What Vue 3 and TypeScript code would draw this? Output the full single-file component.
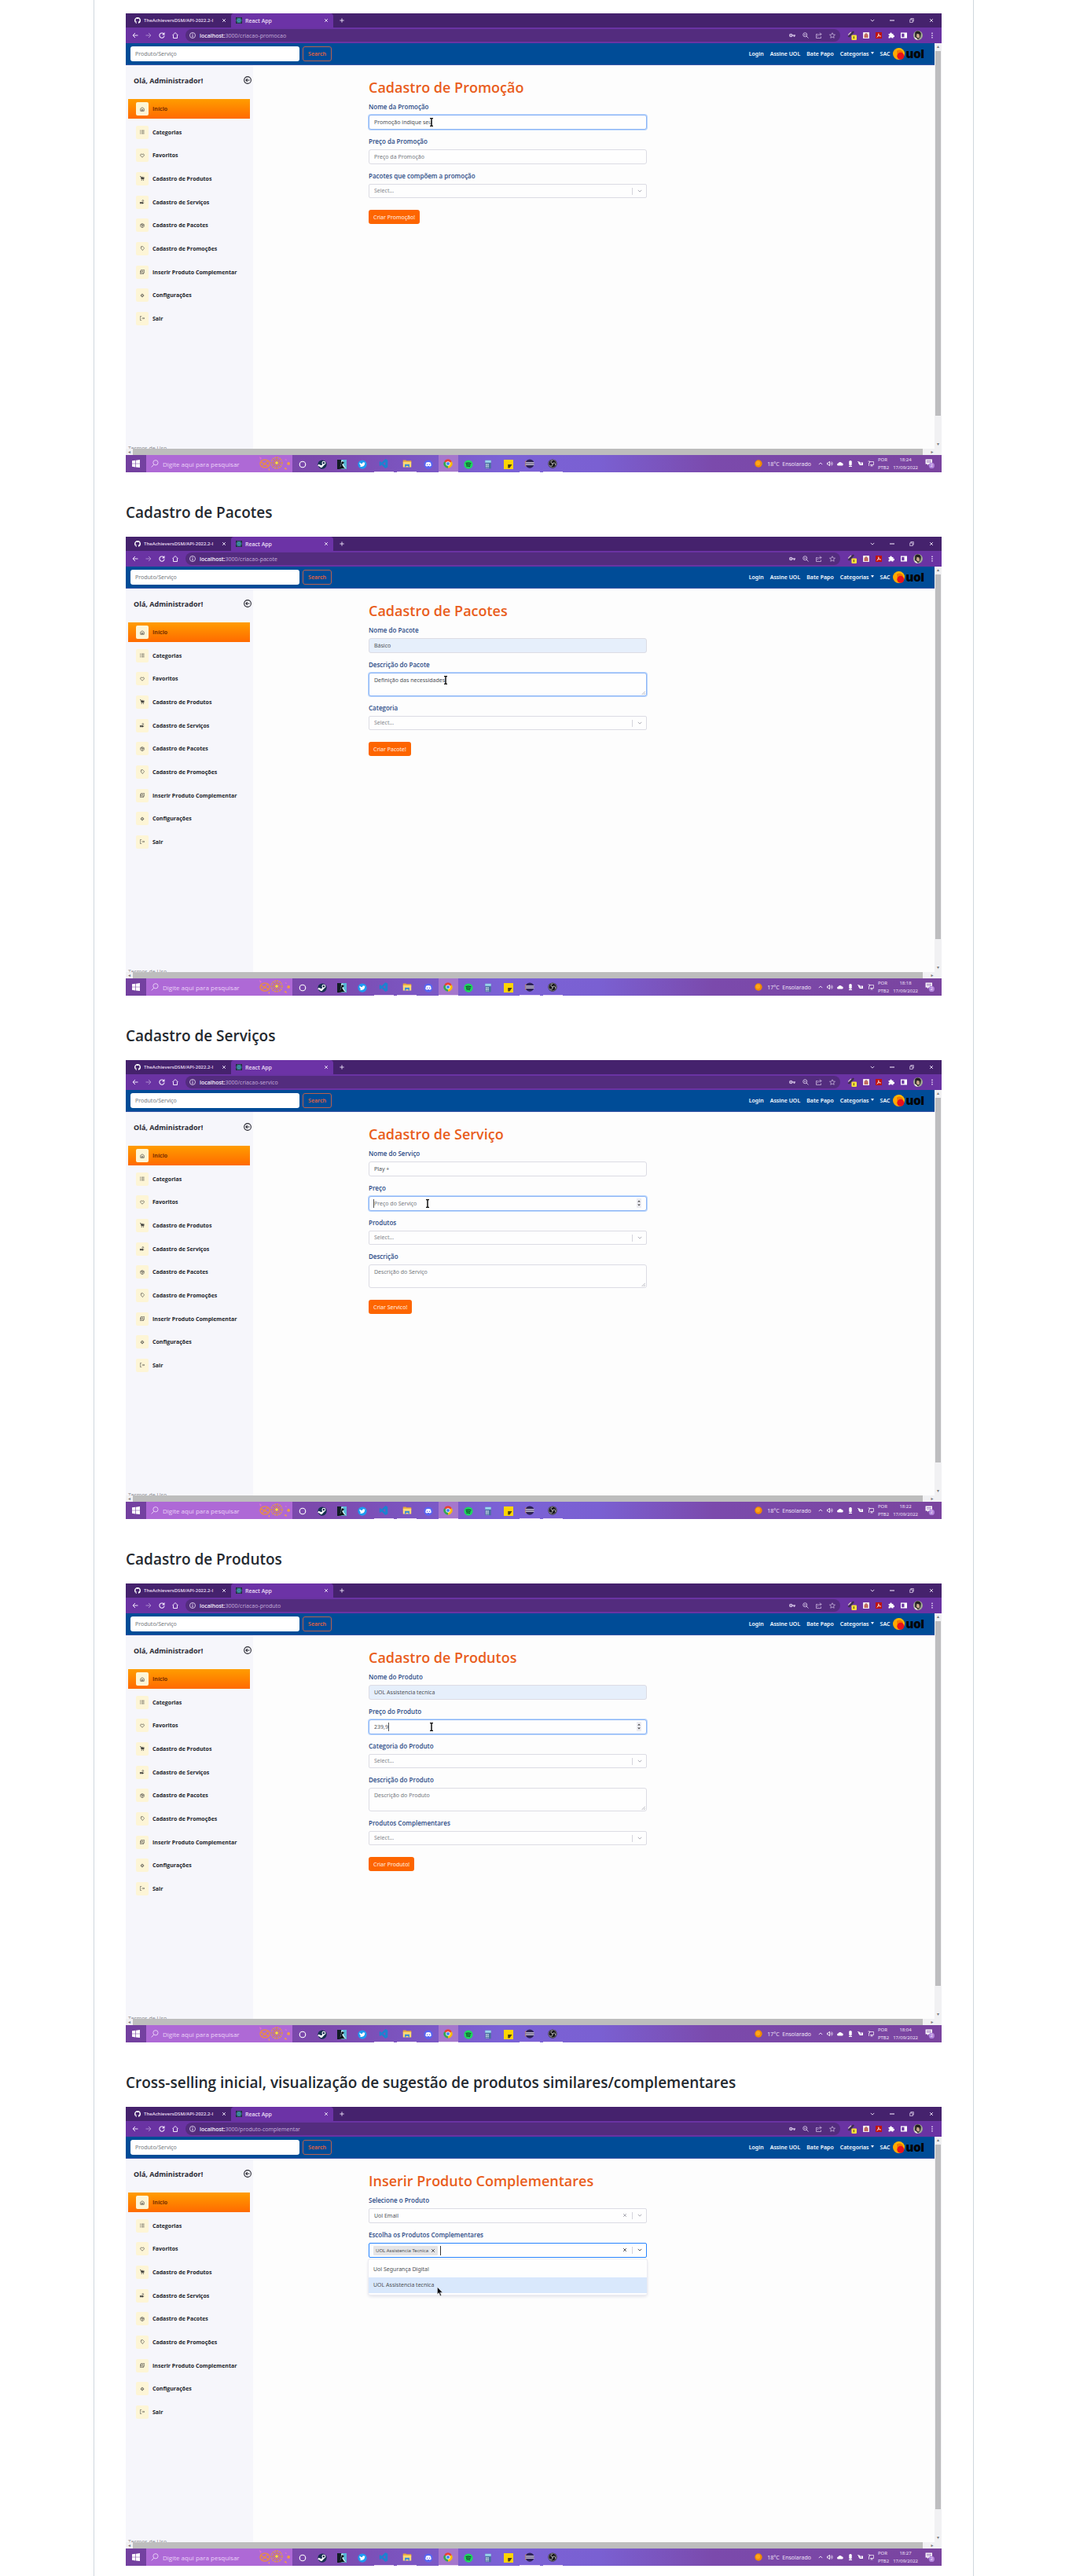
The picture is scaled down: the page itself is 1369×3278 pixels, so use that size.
<script setup lang="ts">
interface Field {
  kind: 'text' | 'area' | 'select' | 'picked' | 'multi'
  label: string
  value?: string
  hint?: string
  focus?: boolean
  filled?: boolean
  spin?: boolean
  pointer?: number
  caret?: number
}

interface Shot {
  id: string
  heading?: string
  path: string
  title: string
  fields: Field[]
  action?: string
  weather: string
  time: string
}

const shots: Shot[] = [
  {
    id: 'promocao',
    path: 'criacao-promocao',
    title: 'Cadastro de Promoção',
    fields: [
      { kind: 'text', label: 'Nome da Promoção', value: 'Promoção indique seu', focus: true, pointer: 80 },
      { kind: 'text', label: 'Preço da Promoção', hint: 'Preço da Promoção' },
      { kind: 'select', label: 'Pacotes que compõem a promoção' },
    ],
    action: 'Criar Promoção!',
    weather: '18°C',
    time: '18:24',
  },
  {
    id: 'pacote',
    heading: 'Cadastro de Pacotes',
    path: 'criacao-pacote',
    title: 'Cadastro de Pacotes',
    fields: [
      { kind: 'text', label: 'Nome do Pacote', value: 'Básico', filled: true },
      { kind: 'area', label: 'Descrição do Pacote', value: 'Definição das necessidades', focus: true, pointer: 98 },
      { kind: 'select', label: 'Categoria' },
    ],
    action: 'Criar Pacote!',
    weather: '17°C',
    time: '18:18',
  },
  {
    id: 'servico',
    heading: 'Cadastro de Serviços',
    path: 'criacao-servico',
    title: 'Cadastro de Serviço',
    fields: [
      { kind: 'text', label: 'Nome do Serviço', value: 'Play +' },
      { kind: 'text', label: 'Preço', hint: 'Preço do Serviço', focus: true, spin: true, pointer: 75, caret: 6 },
      { kind: 'select', label: 'Produtos' },
      { kind: 'area', label: 'Descrição', hint: 'Descrição do Serviço' },
    ],
    action: 'Criar Servico!',
    weather: '18°C',
    time: '18:22',
  },
  {
    id: 'produto',
    heading: 'Cadastro de Produtos',
    path: 'criacao-produto',
    title: 'Cadastro de Produtos',
    fields: [
      { kind: 'text', label: 'Nome do Produto', value: 'UOL Assistencia tecnica', filled: true },
      { kind: 'text', label: 'Preço do Produto', value: '239,9', focus: true, spin: true, pointer: 80, caret: 25 },
      { kind: 'select', label: 'Categoria do Produto' },
      { kind: 'area', label: 'Descrição do Produto', hint: 'Descrição do Produto' },
      { kind: 'select', label: 'Produtos Complementares' },
    ],
    action: 'Criar Produto!',
    weather: '17°C',
    time: '18:04',
  },
  {
    id: 'complementar',
    heading: 'Cross-selling inicial, visualização de sugestão de produtos similares/complementares',
    path: 'produto-complementar',
    title: 'Inserir Produto Complementares',
    fields: [
      { kind: 'picked', label: 'Selecione o Produto', value: 'Uol Email' },
      { kind: 'multi', label: 'Escolha os Produtos Complementares', value: 'UOL Assistencia Tecnica', focus: true },
    ],
    weather: '18°C',
    time: '18:27',
  },
]

const menu = [
  ['home', 'Início'],
  ['list', 'Categorias'],
  ['heart', 'Favoritos'],
  ['cart', 'Cadastro de Produtos'],
  ['service', 'Cadastro de Serviços'],
  ['box', 'Cadastro de Pacotes'],
  ['tag', 'Cadastro de Promoções'],
  ['insert', 'Inserir Produto Complementar'],
  ['gear', 'Configurações'],
  ['exit', 'Sair'],
]

const navLinks = ['Login', 'Assine UOL', 'Bate Papo']

const apps = [
  { icon: 'cortana' },
  { icon: 'steam' },
  { icon: 'kindle' },
  { icon: 'twitter' },
  { icon: 'vscode', open: true },
  { icon: 'folder', open: true },
  { icon: 'discord' },
  { icon: 'chrome', open: true, active: true },
  { icon: 'spotify' },
  { icon: 'calc' },
  { icon: 'notes' },
  { icon: 'eclipse', open: true },
  { icon: 'obs', open: true },
]
</script>

<template>
  <svg class="sprite" aria-hidden="true">
    <defs>
      <symbol id="i-github" viewBox="0 0 16 16"><path fill="#fff" d="M8 0C3.580 0 0 3.580 0 8c0 3.540 2.290 6.530 5.470 7.590.4.070.550-.170.550-.380v-1.490c-2.010.370-2.530-.490-2.690-.940-.090-.230-.480-.940-.820-1.130-.280-.150-.680-.520-.010-.530.630-.010 1.080.580 1.230.820.720 1.210 1.870.870 2.330.660.070-.520.280-.870.510-1.070-1.780-.2-3.640-.890-3.640-3.950 0-.870.310-1.590.820-2.150-.080-.2-.360-1.020.080-2.120 0 0 .670-.210 2.200.820a7.500 7.500 0 0 1 4 0c1.530-1.040 2.200-.820 2.200-.820.440 1.100.160 1.920.080 2.120.510.560.820 1.270.820 2.150 0 3.070-1.870 3.750-3.650 3.950.290.250.540.730.540 1.480v2.200c0 .210.150.460.550.380A8 8 0 0 0 8 0z" /></symbol>
      <symbol id="i-react" viewBox="0 0 16 16"><rect width="16" height="16" fill="#20303c" /><g fill="none" stroke="#4fc3dc"><ellipse cx="8" cy="8" rx="7" ry="2.700" /><ellipse cx="8" cy="8" rx="7" ry="2.700" transform="rotate(60 8 8)" /><ellipse cx="8" cy="8" rx="7" ry="2.700" transform="rotate(120 8 8)" /></g><circle cx="8" cy="8" r="1.500" fill="#4fc3dc" /></symbol>
      <symbol id="i-close" viewBox="0 0 16 16"><path d="M3 3l10 10M13 3L3 13" fill="none" stroke="currentColor" stroke-width="2.500" /></symbol>
      <symbol id="i-plus" viewBox="0 0 16 16"><path d="M8 1v14M1 8h14" fill="none" stroke="currentColor" stroke-width="2.500" /></symbol>
      <symbol id="i-down" viewBox="0 0 16 16"><path d="M2 5l6 6 6-6" fill="none" stroke="currentColor" stroke-width="2.500" /></symbol>
      <symbol id="i-up" viewBox="0 0 16 16"><path d="M2 11l6-6 6 6" fill="none" stroke="currentColor" stroke-width="2.500" /></symbol>
      <symbol id="i-min" viewBox="0 0 16 16"><path d="M0 8h16" stroke="currentColor" stroke-width="3" /></symbol>
      <symbol id="i-restore" viewBox="0 0 16 16"><path d="M2 5h9v10H2zM5 5V1h9v10h-3" fill="none" stroke="currentColor" stroke-width="2" /></symbol>
      <symbol id="i-back" viewBox="0 0 16 16"><path d="M15 8H2M8 2L2 8l6 6" fill="none" stroke="currentColor" stroke-width="2" /></symbol>
      <symbol id="i-forward" viewBox="0 0 16 16"><path d="M1 8h13M8 2l6 6-6 6" fill="none" stroke="currentColor" stroke-width="2" /></symbol>
      <symbol id="i-reload" viewBox="0 0 16 16"><path d="M13 4.500A6.200 6.200 0 1 0 14.200 9" fill="none" stroke="currentColor" stroke-width="2.300" /><path d="M15 0v7H8z" fill="currentColor" /></symbol>
      <symbol id="i-house" viewBox="0 0 16 16"><path d="M1 8l7-7 7 7M3 7v8h10V7" fill="none" stroke="currentColor" stroke-width="2" /></symbol>
      <symbol id="i-info" viewBox="0 0 16 16"><circle cx="8" cy="8" r="7" fill="none" stroke="currentColor" stroke-width="1.600" /><path d="M8 3.500v2M8 7v5.500" stroke="currentColor" stroke-width="2" /></symbol>
      <symbol id="i-key" viewBox="0 0 16 16"><circle cx="4.500" cy="8" r="3" fill="none" stroke="currentColor" stroke-width="3" /><path d="M7 8h9M13 8v4" stroke="currentColor" stroke-width="3" /></symbol>
      <symbol id="i-lens" viewBox="0 0 16 16"><circle cx="6.500" cy="6.500" r="5" fill="none" stroke="currentColor" stroke-width="2" /><path d="M10 10l5 5M4 6.500h5" stroke="currentColor" stroke-width="2" /></symbol>
      <symbol id="i-share" viewBox="0 0 16 16"><path d="M5 5H1v10h12v-4M4 11c0-5 4-6 10-6M10 1l4 4-4 4" fill="none" stroke="currentColor" stroke-width="1.600" /></symbol>
      <symbol id="i-star" viewBox="0 0 16 16"><path d="M8 1.500l2 4.500 5 .5-3.800 3.200 1.200 4.800L8 12l-4.400 2.500 1.200-4.800L1 6.500 6 6z" fill="none" stroke="currentColor" stroke-width="1.500" /></symbol>
      <symbol id="i-pen" viewBox="0 0 20 20"><path d="M1 13L12 1l3 2L5 14z" fill="#3b3048" /><path d="M2 9l6-6" stroke="#d8cfc0" stroke-width="2" /><rect x="9" y="9" width="11" height="11" rx="2" fill="#f7e03c" /><path d="M14 12v5" stroke="#6a5a10" stroke-width="2" /></symbol>
      <symbol id="i-ext" viewBox="0 0 16 16"><rect width="16" height="16" rx="1" fill="#f4e8e8" /><path d="M4 14V7l3-4v11M9 14V3l3 4v7" fill="#e0623a" stroke="#8a3a4a" /></symbol>
      <symbol id="i-pdf" viewBox="0 0 16 16"><rect width="16" height="16" fill="#c0140c" /><path d="M3 13C7 11 8 6 7.500 3M7.500 4c0 4 3 6 6 6M4 11c3-2 6-2 9-1" fill="none" stroke="#fff" stroke-width="1.400" /></symbol>
      <symbol id="i-puzzle" viewBox="0 0 16 16"><path fill="#fff" d="M1 4h4a2.200 2.200 0 1 1 4 0h4v4a2.200 2.200 0 1 1 0 4v3H9a2 2 0 1 0-4 0H1v-4a2 2 0 1 0 0-4z" /></symbol>
      <symbol id="i-panel" viewBox="0 0 16 16"><path fill="#fff" d="M0 1h16v14H0zM2.500 3.500v9H9v-9z" fill-rule="evenodd" /></symbol>
      <symbol id="i-avatar" viewBox="0 0 16 16"><circle cx="8" cy="8" r="8" fill="#9fa594" /><path d="M3 3c3-4 9-3 10 2l-1 6-4 4-5-4z" fill="#22201f" /><path d="M6 5l4 1 1 5-3 2-3-3z" fill="#c9a58c" /><path d="M1 11l4 1 3 4-4-1z" fill="#e8e4dc" /></symbol>
      <symbol id="i-dots" viewBox="0 0 16 16"><g fill="currentColor"><circle cx="8" cy="2.500" r="1.700" /><circle cx="8" cy="8" r="1.700" /><circle cx="8" cy="13.500" r="1.700" /></g></symbol>
      <symbol id="i-uolball" viewBox="0 0 16 16"><circle cx="8" cy="8" r="8" fill="#ffa800" /><path d="M8 0a8 8 0 0 1 8 8l-3 3-6-1-3-5C4 2 5 1 8 0z" fill="#ffc400" opacity=".6" /><path d="M5 4c3-3 9-1 9 3l-2 6-5 1z" fill="#f57b00" /><circle cx="10.500" cy="11" r="4.800" fill="#e8101c" /></symbol>
      <symbol id="i-circleback" viewBox="0 0 16 16"><circle cx="8" cy="8" r="7" fill="none" stroke="currentColor" stroke-width="1.700" /><path d="M12 8H4.500M7.500 5l-3 3 3 3" fill="none" stroke="currentColor" stroke-width="1.700" /></symbol>
      <symbol id="i-home" viewBox="0 0 16 16"><path d="M2 6l6-4 6 4v8H2zM6 14V9h4v5" fill="none" stroke="currentColor" stroke-width="1.700" /></symbol>
      <symbol id="i-list" viewBox="0 0 16 16"><path d="M5 3h10M5 8h10M5 13h10M0 3h3M0 8h3M0 13h3" stroke="currentColor" stroke-width="1.700" /></symbol>
      <symbol id="i-heart" viewBox="0 0 16 16"><path d="M8 14L2.500 8.500C-.5 5 4 .5 8 4.500c4-4 8.500.5 5.500 4z" fill="none" stroke="currentColor" stroke-width="1.700" /></symbol>
      <symbol id="i-cart" viewBox="0 0 16 16"><path d="M0 1h3l2 9h9" fill="none" stroke="currentColor" stroke-width="2" /><path d="M4 3h3l2 3V2h2l1 3 3-2-1 7H5z" fill="currentColor" /><circle cx="6" cy="13.500" r="1.700" fill="currentColor" /><circle cx="12" cy="13.500" r="1.700" fill="currentColor" /></symbol>
      <symbol id="i-service" viewBox="0 0 16 16"><path d="M0 8h3v6H0zM4 8h4l2 2h5l-5 4H4z" fill="currentColor" /><circle cx="10" cy="4" r="2.500" fill="none" stroke="currentColor" stroke-width="1.500" /></symbol>
      <symbol id="i-box" viewBox="0 0 16 16"><path d="M2 4.500L8 1l6 3.500v7L8 15l-6-3.500zM2 4.500L8 8l6-3.500M8 8v7M5 3l6 3.500V9" fill="none" stroke="currentColor" stroke-width="1.500" /></symbol>
      <symbol id="i-tag" viewBox="0 0 16 16"><path d="M4 2l5-1 6 6-6 8-6-7z" fill="none" stroke="currentColor" stroke-width="1.500" /><circle cx="7" cy="5" r="1.200" fill="currentColor" /></symbol>
      <symbol id="i-insert" viewBox="0 0 16 16"><path d="M4 1h11v10H4zM4 5H1v10h11v-4M9.500 3.500v5M7 6h5" fill="none" stroke="currentColor" stroke-width="1.500" /></symbol>
      <symbol id="i-gear" viewBox="0 0 16 16"><circle cx="8" cy="8" r="4.500" fill="none" stroke="currentColor" stroke-width="2.500" stroke-dasharray="2.500 1" /><circle cx="8" cy="8" r="3.500" fill="none" stroke="currentColor" /><circle cx="8" cy="8" r="1.300" fill="currentColor" /></symbol>
      <symbol id="i-exit" viewBox="0 0 16 16"><path d="M6 1H1v14h5M6 8h9M12 5l3 3-3 3" fill="none" stroke="currentColor" stroke-width="1.500" /></symbol>
      <symbol id="i-ibeam" viewBox="0 0 6 11"><path d="M1 .5h1.500l.5.500.5-.5H5M1 10.500h1.500l.5-.5.5.5H5M3 1v9" fill="none" stroke="#111" stroke-width="1.500" /></symbol>
      <symbol id="i-arrow" viewBox="0 0 8 12"><path d="M.5.500v9l2-2 1.500 4 1.500-.6L4 7.200h3z" fill="#0b0b10" stroke="#fff" stroke-width=".4" /></symbol>
      <symbol id="i-grip" viewBox="0 0 8 8"><path d="M1 8l7-7M5 8l3-3" stroke="#8a8a96" /></symbol>
      <symbol id="i-spin" viewBox="0 0 6 12"><rect width="6" height="12" fill="#ececf2" /><path d="M1.200 4.500L3 2.500l1.800 2zM1.200 7.500L3 9.500l1.800-2z" fill="#444" /></symbol>
      <symbol id="i-windows" viewBox="0 0 16 16"><path d="M0 2l7-1v6.500H0zM8 1l8-1v7.500H8zM0 8.500h7V15l-7-1zM8 8.500h8V16l-8-1z" fill="#fff" /></symbol>
      <symbol id="i-search" viewBox="0 0 16 16"><circle cx="9.500" cy="6" r="5" fill="none" stroke="currentColor" stroke-width="1.500" /><path d="M6 10l-5 5" stroke="currentColor" stroke-width="1.500" /></symbol>
      <symbol id="i-party" viewBox="0 0 40 20"><g fill="none" stroke="#e58a4d" stroke-width="1.600"><ellipse cx="7" cy="10" rx="6" ry="5" /><path d="M2 8l10 5M4 13l7-7" /></g><g fill="none" stroke="#e59a4d" stroke-width="1.300"><circle cx="22" cy="9" r="7" stroke-dasharray="2 1" /><circle cx="22" cy="9" r="4" stroke="#d8767a" /><path d="M22 1v16M14 9h16M16.500 3.500l11 11M27.500 3.500l-11 11" stroke="#c48858" stroke-width=".9" /></g><circle cx="22" cy="9" r="1.800" fill="#f7e03c" /><path d="M36 8c3 0 4 1 2 4l-3-1zM31 16l3-1 1 3z" fill="#f0a040" /><path d="M0 1l3 2-2 2zM32 5l2-1 1 2z" fill="#e070d0" /><path d="M11 17l2-1v3z" fill="#f0a040" /></symbol>
      <symbol id="i-cortana" viewBox="0 0 16 16"><circle cx="8" cy="8" r="5" fill="none" stroke="#fff" stroke-width="1.500" /></symbol>
      <symbol id="i-steam" viewBox="0 0 16 16"><circle cx="8" cy="8" r="7.500" fill="#15304f" /><path d="M1 9l6 2.500L11 7" fill="none" stroke="#fff" stroke-width="3" /><circle cx="10.500" cy="5.500" r="2.500" fill="#15304f" stroke="#fff" stroke-width="1.500" /><circle cx="6" cy="11.500" r="1.800" fill="#fff" /></symbol>
      <symbol id="i-kindle" viewBox="0 0 16 16"><rect x="0" y="0" width="16" height="16" fill="#58b8d8" /><path d="M0 0h7v16H0z" fill="#111c24" /><path d="M7 1h3l1 8 4 6H4l2-6z" fill="#c9eef4" /><path d="M13 4l-5 4 4 6 3 1H2l4-4V7z" fill="#0d1418" /><circle cx="9" cy="5" r="2" fill="#0d1418" /></symbol>
      <symbol id="i-twitter" viewBox="0 0 16 16"><circle cx="8" cy="8" r="7.500" fill="#1d9bf0" /><path fill="#fff" d="M3.500 4.500c1.500 1.800 3 2.300 4.500 2.300C8 4 10.500 3.500 11.500 5l1.500-.4-.8 1.400c.2 4.200-4.200 7.500-8.700 5.200 1.200 0 2-.3 2.500-.9C4.500 10 4.200 9 4.200 8.500 3 7.500 3 5.500 3.500 4.500z" /></symbol>
      <symbol id="i-vscode" viewBox="0 0 16 16"><path d="M11 0l4 2v12l-4 2-6-6-3 2-1-1V5l1-1 3 2zM11 5L7 8l4 3z" fill="#1b83cf" fill-rule="evenodd" /></symbol>
      <symbol id="i-folder" viewBox="0 0 16 16"><path d="M1 2h5l1 1h8v4H1z" fill="#e8a93a" /><path d="M1 5h14v9H1z" fill="#fcd974" /><path d="M4 9h8v5h-2v-2H6v2H4z" fill="#3d8ed6" /></symbol>
      <symbol id="i-discord" viewBox="0 0 16 16"><circle cx="8" cy="8" r="7.500" fill="#5865f2" /><path d="M4 5c3-1.500 5-1.500 8 0l1 5c-1 1-2 1.500-3 1.500l-.5-1h-3l-.5 1c-1 0-2-.5-3-1.500z" fill="#fff" /><circle cx="6.200" cy="8.300" r="1" fill="#5865f2" /><circle cx="9.800" cy="8.300" r="1" fill="#5865f2" /></symbol>
      <symbol id="i-chrome" viewBox="0 0 16 16"><path d="M8 8L1.500 4.200A7.500 7.500 0 0 1 14.500 4.200z" fill="#e94335" /><path d="M8 8h0L1.500 4.200A7.500 7.500 0 0 0 8 15.500z" fill="#33a852" /><path d="M8 8l6.500-3.800A7.500 7.500 0 0 1 8 15.500z" fill="#fbbc05" /><circle cx="8" cy="8" r="3.700" fill="#fff" /><circle cx="8" cy="8" r="2.800" fill="#4285f4" /></symbol>
      <symbol id="i-spotify" viewBox="0 0 16 16"><circle cx="8" cy="8" r="7.500" fill="#1ed760" /><path d="M3.500 6c3-1 6.500-.7 9 .7M4 8.500c2.500-.8 5.300-.5 7.500.7M4.500 11c2-.6 4.200-.4 6 .5" fill="none" stroke="#12351f" stroke-width="1.500" /></symbol>
      <symbol id="i-calc" viewBox="0 0 16 16"><path d="M3 1h10v14H3z" fill="#4a6fa0" /><path d="M3 1h10v4H3z" fill="#9ad4ec" /><path d="M4 7h2v2H4zM7 7h2v2H7zM4 10h2v2H4zM7 10h2v2H7zM4 13h2v1H4zM7 13h2v1H7z" fill="#dfe8f0" /></symbol>
      <symbol id="i-notes" viewBox="0 0 16 16"><rect x="0" y="0" width="16" height="16" fill="#ffd500" /><path d="M7 8h7l-4 6H7z" fill="#4a3f16" /></symbol>
      <symbol id="i-eclipse" viewBox="0 0 16 16"><circle cx="8" cy="8" r="7.500" fill="#2c2255" /><path d="M.5 6.500h15M.5 9.500h15" stroke="#e4e0ee" stroke-width="1.700" /><path d="M2 3a7.500 7.500 0 0 0 0 10" fill="none" stroke="#d98a3a" /></symbol>
      <symbol id="i-obs" viewBox="0 0 16 16"><circle cx="8" cy="8" r="7.500" fill="#17161a" /><g fill="none" stroke="#c8c8c8" stroke-width="1.300"><circle cx="8" cy="8" r="6.500" stroke-width=".7" /><path d="M8 8C4 7 5 3 8 3M8 8c3-3 6 0 4.500 2.500M8 8c1 4-3 5.500-5 3" /></g></symbol>
      <symbol id="i-sun" viewBox="0 0 16 16"><circle cx="8" cy="8" r="7.500" fill="#f08a00" /><circle cx="7" cy="7" r="4.500" fill="#ffa51a" /></symbol>
      <symbol id="i-speaker" viewBox="0 0 16 16"><path d="M1 6h3l3-4v12l-3-4H1zM9.500 5c1.500 2 1.500 4 0 6M12 3c3 3 3 7 0 10" fill="none" stroke="#fff" stroke-width="1.500" /></symbol>
      <symbol id="i-cloud" viewBox="0 0 16 16"><path d="M3 13a3 3 0 0 1 0-6 5 5 0 0 1 9-.5 3.300 3.300 0 0 1 1 6.500z" fill="#fff" /></symbol>
      <symbol id="i-mic" viewBox="0 0 16 16"><rect x="4.500" y="0" width="7" height="13" rx="3" fill="#fff" /><path d="M4 15h8" stroke="#fff" stroke-width="2" /></symbol>
      <symbol id="i-battery" viewBox="0 0 16 16"><path d="M3 5h11v7H5V9H3z" fill="#fff" /><path d="M0 3h3v4M5 3v3H2" fill="none" stroke="#fff" stroke-width="1.500" /><path d="M9 5v5" stroke="#7a4aa8" stroke-width="1.500" /></symbol>
      <symbol id="i-network" viewBox="0 0 16 16"><path d="M4 3h11v8H6M10 11v3M7 14h6M1 2h4v4H3v8" fill="none" stroke="#fff" stroke-width="1.400" /></symbol>
      <symbol id="i-notice" viewBox="0 0 20 20"><path d="M1 1h14v10H7l-2 3v-3H1z" fill="#fff" /><path d="M3 4h10M3 7h10" stroke="#7a45a5" stroke-width="1.200" /><circle cx="14" cy="14" r="6" fill="#b184dc" /></symbol>
    </defs>
  </svg>

  <article class="readme">
    <section v-for="shot in shots" :key="shot.id">
      <h3 v-if="shot.heading" class="heading">{{ shot.heading }}</h3>
      <div class="screen">
        <div class="tabs">
          <div class="tab">
            <svg class="ic8"><use href="#i-github" /></svg>
            <span class="tab-name">TheAchieversDSM/API-2022.2-I</span>
            <svg class="ic6"><use href="#i-close" /></svg>
          </div>
          <div class="tab current">
            <svg class="ic8"><use href="#i-react" /></svg>
            <span class="tab-name">React App</span>
            <svg class="ic6"><use href="#i-close" /></svg>
          </div>
          <svg class="ic6 plus"><use href="#i-plus" /></svg>
          <div class="controls">
            <svg class="ic6"><use href="#i-down" /></svg>
            <svg class="ic6"><use href="#i-min" /></svg>
            <svg class="ic6"><use href="#i-restore" /></svg>
            <svg class="ic6"><use href="#i-close" /></svg>
          </div>
        </div>

        <div class="toolbar">
          <svg class="ic8"><use href="#i-back" /></svg>
          <svg class="ic8 dim"><use href="#i-forward" /></svg>
          <svg class="ic8"><use href="#i-reload" /></svg>
          <svg class="ic8"><use href="#i-house" /></svg>
          <div class="address">
            <svg class="ic8"><use href="#i-info" /></svg>
            <span class="url"><b>localhost:</b>3000/{{ shot.path }}</span>
            <div class="address-tools">
              <svg class="ic8"><use href="#i-key" /></svg>
              <svg class="ic8"><use href="#i-lens" /></svg>
              <svg class="ic8"><use href="#i-share" /></svg>
              <svg class="ic8"><use href="#i-star" /></svg>
            </div>
          </div>
          <div class="extensions">
            <svg class="ic12"><use href="#i-pen" /></svg>
            <svg class="ic8"><use href="#i-ext" /></svg>
            <svg class="ic8"><use href="#i-pdf" /></svg>
            <svg class="ic8"><use href="#i-puzzle" /></svg>
            <svg class="ic8"><use href="#i-panel" /></svg>
            <svg class="ic12"><use href="#i-avatar" /></svg>
            <svg class="ic8"><use href="#i-dots" /></svg>
          </div>
        </div>

        <div class="viewport">
          <div class="page">
            <header class="navbar">
              <input class="search" type="search" placeholder="Produto/Serviço" aria-label="Produto/Serviço" />
              <button class="search-btn" type="button">Search</button>
              <nav class="links">
                <a v-for="link in navLinks" :key="link" href="#">{{ link }}</a>
                <a href="#" class="drop">Categorias</a>
                <a href="#">SAC</a>
                <a href="#" class="logo">
                  <svg class="ball"><use href="#i-uolball" /></svg>
                  <span>uol</span>
                </a>
              </nav>
            </header>
            <div class="body">
              <aside class="sidebar">
                <div class="hello">
                  <strong>Olá, Administrador!</strong>
                  <svg class="ic10"><use href="#i-circleback" /></svg>
                </div>
                <ul class="menu">
                  <li v-for="([icon, name], i) in menu" :key="name">
                    <a href="#" :class="{ on: i === 0 }">
                      <span class="menu-icon"><svg class="ic6"><use :href="'#i-' + icon" /></svg></span>
                      {{ name }}
                    </a>
                  </li>
                </ul>
                <div class="terms">Termos de Uso</div>
              </aside>
              <main class="content">
                <form class="form" @submit.prevent>
                  <h1>{{ shot.title }}</h1>
                  <div v-for="(f, i) in shot.fields" :key="f.label" class="field">
                    <label :for="shot.id + i">{{ f.label }}</label>
                    <div class="control">
                      <input
                        v-if="f.kind === 'text'"
                        :id="shot.id + i"
                        type="text"
                        class="box"
                        :class="{ focus: f.focus, filled: f.filled }"
                        :value="f.value"
                        :placeholder="f.hint"
                      />
                      <textarea
                        v-else-if="f.kind === 'area'"
                        :id="shot.id + i"
                        class="box area"
                        :class="{ focus: f.focus }"
                        :value="f.value"
                        :placeholder="f.hint"
                      ></textarea>
                      <select
                        v-else-if="f.kind === 'select' || f.kind === 'picked'"
                        :id="shot.id + i"
                        class="box pick"
                        :class="{ chosen: f.kind === 'picked' }"
                      >
                        <option>{{ f.value || 'Select...' }}</option>
                      </select>
                      <div v-else class="box multi">
                        <span class="chip">{{ f.value }}<svg class="ic6"><use href="#i-close" /></svg></span>
                        <input :id="shot.id + i" type="text" role="combobox" aria-expanded="true" />
                        <ul class="options" role="listbox">
                          <li role="option">Uol Segurança Digital</li>
                          <li role="option" class="hover">UOL Assistencia tecnica</li>
                        </ul>
                        <svg class="arrow"><use href="#i-arrow" /></svg>
                      </div>
                      <div v-if="f.kind !== 'text' && f.kind !== 'area'" class="tools" :class="{ strong: f.kind === 'multi' }">
                        <svg v-if="f.kind !== 'select'" class="ic6"><use href="#i-close" /></svg>
                        <i></i>
                        <svg class="ic6"><use href="#i-down" /></svg>
                      </div>
                      <svg v-if="f.kind === 'area'" class="grip"><use href="#i-grip" /></svg>
                      <svg v-if="f.spin" class="spin"><use href="#i-spin" /></svg>
                      <i v-if="f.caret" class="caret" :style="{ left: f.caret + 'px' }"></i>
                      <svg v-if="f.pointer" class="ibeam" :style="{ left: f.pointer + 'px' }"><use href="#i-ibeam" /></svg>
                    </div>
                  </div>
                  <button v-if="shot.action" class="submit" type="submit">{{ shot.action }}</button>
                </form>
              </main>
            </div>
          </div>
          <div class="vbar"><b>▴</b><i></i><b>▾</b></div>
        </div>
        <div class="hbar"><b>◂</b><i></i><b>▸</b></div>

        <footer class="taskbar">
          <div class="start"><svg class="ic10"><use href="#i-windows" /></svg></div>
          <div class="find">
            <svg class="ic10"><use href="#i-search" /></svg>
            <span>Digite aqui para pesquisar</span>
            <svg class="party"><use href="#i-party" /></svg>
          </div>
          <div class="apps">
            <div v-for="app in apps" :key="app.icon" class="app" :class="{ open: app.open, active: app.active }">
              <svg class="ic12"><use :href="'#i-' + app.icon" /></svg>
            </div>
          </div>
          <div class="tray">
            <svg class="ic10"><use href="#i-sun" /></svg>
            <span class="weather">{{ shot.weather }}&nbsp; Ensolarado</span>
            <div class="status">
              <svg class="ic6"><use href="#i-up" /></svg>
              <svg class="ic8"><use href="#i-speaker" /></svg>
              <svg class="ic8"><use href="#i-cloud" /></svg>
              <svg class="ic8"><use href="#i-mic" /></svg>
              <svg class="ic8"><use href="#i-battery" /></svg>
              <svg class="ic8"><use href="#i-network" /></svg>
            </div>
            <div class="lang"><span>POR</span><span>PTB2</span></div>
            <div class="clock"><span>{{ shot.time }}</span><span>17/09/2022</span></div>
            <div class="notice"><svg class="ic12"><use href="#i-notice" /></svg><span>2</span></div>
          </div>
        </footer>
      </div>
    </section>
  </article>
</template>

<style>
body {
  background: #fff;
}
</style>

<style scoped>
* {
  box-sizing: border-box;
}
.sprite {
  position: absolute;
  width: 0;
  height: 0;
}
.readme {
  margin: 0 130px 0 119px;
  padding: 17px 40px 13px;
  border: solid #d0d7de;
  border-width: 0 1px;
  font-family: "Open Sans", "Noto Sans", sans-serif;
  color: #24292f;
}
.heading {
  margin: 38px 0 18px;
  font-size: 19px;
  font-weight: 600;
  line-height: 26px;
}
.screen {
  display: flex;
  flex-direction: column;
  aspect-ratio: 1038 / 584;
  overflow: hidden;
  background: #fdfdfd;
  font-size: 8px;
}
.screen svg {
  display: block;
  flex: none;
}
.ic6 { width: 6px; height: 6px; }
.ic8 { width: 8px; height: 8px; }
.ic10 { width: 10px; height: 10px; }
.ic12 { width: 12px; height: 12px; }

.tabs {
  display: flex;
  align-items: stretch;
  flex: none;
  height: 18px;
  background: #45226d;
  color: #e9def4;
}
.tab {
  display: flex;
  align-items: center;
  gap: 4px;
  width: 134px;
  padding: 0 6px 0 11px;
  font-size: 6px;
  font-weight: 600;
}
.tab.current {
  width: 130px;
  padding-left: 6px;
  border-radius: 4px 4px 0 0;
  background: #6c33a6;
  font-size: 7px;
}
.tab-name {
  flex: 1;
  white-space: nowrap;
}
.plus {
  align-self: center;
  margin-left: 8px;
}
.controls {
  display: flex;
  align-items: center;
  gap: 19px;
  margin-left: auto;
  margin-right: 10px;
}
.toolbar {
  display: flex;
  align-items: center;
  gap: 9px;
  flex: none;
  height: 20px;
  padding: 0 8px;
  background: #6a33a3;
  color: #f0e6fa;
}
.dim {
  opacity: 0.5;
}
.address {
  display: flex;
  align-items: center;
  flex: 1;
  gap: 5px;
  height: 16px;
  padding: 0 6px 0 5px;
  border-radius: 8px;
  background: #532c7e;
}
.url {
  color: #c4aedb;
  font-size: 7px;
}
.url b {
  font-weight: 600;
  color: #f6effc;
}
.address-tools {
  display: flex;
  gap: 9px;
  margin-left: auto;
  color: #cbb8de;
}
.extensions {
  display: flex;
  align-items: center;
  gap: 8px;
}

.viewport {
  display: flex;
  flex: 1;
  min-height: 0;
}
.page {
  display: flex;
  flex-direction: column;
  flex: 1;
}
.navbar {
  display: flex;
  align-items: center;
  flex: none;
  height: 28px;
  padding: 0 13px 0 6px;
  border-bottom: 1px solid #3a57a8;
  background: #004c97;
}
.search {
  width: 215px;
  height: 19px;
  padding: 0 6px;
  border: 0;
  border-radius: 3px;
  background: #fff;
  font: 400 7px "Noto Sans", sans-serif;
}
input::placeholder,
textarea::placeholder {
  color: #75797e;
  opacity: 1;
}
.search-btn {
  width: 37px;
  height: 19px;
  margin-left: 4px;
  padding: 0;
  border: 1px solid #b8604f;
  border-radius: 3px;
  background: none;
  color: #e0603f;
  font: 600 7px "Noto Sans", sans-serif;
}
.links {
  display: flex;
  align-items: center;
  gap: 8px;
  margin-left: auto;
}
.links a {
  color: #f6faff;
  font-weight: 600;
  font-size: 7px;
  font-family: "Noto Sans", sans-serif;
  text-decoration: none;
}
.drop::after {
  content: "";
  display: inline-block;
  margin-left: 2px;
  border: 2px solid transparent;
  border-top: 3px solid #eef4fb;
  border-bottom: 0;
  vertical-align: 2px;
}
.links .logo {
  display: flex;
  align-items: center;
  gap: 1px;
  height: 16px;
  margin-left: -4px;
  color: #050505;
  font: 900 15px/16px Inter, sans-serif;
}
.ball {
  width: 15px;
  height: 15px;
}

.body {
  display: flex;
  flex: 1;
  min-height: 0;
}
.sidebar {
  display: flex;
  flex-direction: column;
  width: 162px;
  background: #f6f6fb;
  overflow: hidden;
}
.hello {
  display: flex;
  align-items: center;
  justify-content: space-between;
  flex: none;
  height: 43px;
  padding: 0 2px 5px 10px;
  color: #2a2a33;
  font-size: 9px;
}
.hello strong {
  font-weight: 700;
}
.menu {
  display: flex;
  flex-direction: column;
  justify-content: space-between;
  flex: none;
  height: 292px;
  margin: 0;
  padding: 0 4px 0 3px;
  list-style: none;
}
.menu a {
  display: flex;
  align-items: center;
  gap: 5px;
  height: 25px;
  padding-left: 10px;
  color: #22242a;
  font-weight: 700;
  font-size: 7px;
  text-decoration: none;
  white-space: nowrap;
}
.menu a.on {
  background: linear-gradient(#ff9d00, #ff6a00);
  color: #7a2f00;
}
.menu-icon {
  display: grid;
  place-items: center;
  width: 16px;
  height: 17px;
  border-radius: 2px;
  background: #fdf5d6;
  color: #3d3d3a;
}
.terms {
  height: 5px;
  margin-top: auto;
  padding-left: 3px;
  overflow: hidden;
  color: #8a8a90;
  font-size: 7px;
  line-height: 10px;
}
.content {
  flex: 1;
  padding: 16px 0 0 147px;
}
.form {
  width: 354px;
}
.form h1 {
  margin: 0 0 6px;
  color: #e95d1c;
  font-size: 18px;
  font-weight: 600;
  line-height: 24px;
}
.field {
  margin-bottom: 8px;
}
.field label {
  display: block;
  margin-bottom: 3px;
  color: #2b4a86;
  font-size: 8px;
  font-weight: 600;
  line-height: 14px;
}
.control {
  position: relative;
}
.box {
  display: block;
  width: 100%;
  height: 19px;
  padding: 0 6px;
  border: 1px solid #dcdce4;
  border-radius: 3px;
  background: #fefefe;
  color: #4e5257;
  font: 400 7px/12px "Noto Sans", sans-serif;
  outline: 0;
}
.box.filled {
  background: #e6effb;
}
.box.focus {
  border-color: #8bb4f5;
  box-shadow: 0 0 0 1px #bcd7fd;
}
.area {
  height: 30px;
  padding: 3px 6px;
  resize: none;
}
.pick {
  height: 18px;
  border-radius: 2px;
  appearance: none;
  color: #85878c;
}
.pick.chosen {
  height: 19px;
  color: #4e5257;
}
.tools {
  position: absolute;
  top: 0;
  right: 6px;
  display: flex;
  align-items: center;
  gap: 6px;
  height: 18px;
  color: #a4a4ae;
}
.tools.strong {
  color: #44444a;
}
.tools i {
  width: 1px;
  height: 9px;
  background: #d4d4dc;
}
.multi {
  display: flex;
  align-items: center;
  padding: 0 5px;
  border-color: #2684ff;
  border-radius: 2px;
}
.multi input {
  width: 100px;
  height: 12px;
  margin-left: 3px;
  padding: 0;
  border: 0;
  border-left: 1px solid #333;
  background: none;
  outline: 0;
}
.chip {
  display: flex;
  align-items: center;
  gap: 3px;
  padding: 0 3px;
  border-radius: 1px;
  background: #e4e4e6;
  color: #4c4c50;
  font-size: 6px;
  line-height: 12px;
}
.options {
  position: absolute;
  z-index: 1;
  top: 21px;
  left: 0;
  right: 0;
  margin: 0;
  padding: 3px 0 2px;
  border-radius: 2px;
  background: #fefefe;
  box-shadow: 0 0 0 1px #ececf2, 0 2px 4px #dcdce4;
  list-style: none;
}
.options li {
  padding-left: 6px;
  line-height: 20px;
}
.options .hover {
  background: #d9e8fc;
}
.arrow {
  position: absolute;
  z-index: 2;
  top: 56px;
  left: 87px;
  width: 8px;
  height: 12px;
}
.grip {
  position: absolute;
  right: 2px;
  bottom: 2px;
  width: 5px;
  height: 5px;
}
.spin {
  position: absolute;
  top: 3px;
  right: 7px;
  width: 6px;
  height: 12px;
}
.caret {
  position: absolute;
  top: 4px;
  width: 1px;
  height: 11px;
  background: #555;
}
.ibeam {
  position: absolute;
  top: 4px;
  width: 6px;
  height: 11px;
  margin-left: -3px;
}
.submit {
  display: block;
  height: 18px;
  margin-top: 15px;
  padding: 0 6px;
  border: 0;
  border-radius: 3px;
  background: #fd6500;
  color: #fff0e4;
  font: 400 7px "Noto Sans", sans-serif;
}

.vbar,
.hbar {
  display: flex;
  background: #f1f1f3;
  color: #7a7a7a;
  font: 6px/8px "DejaVu Sans", sans-serif;
  text-align: center;
}
.vbar {
  flex-direction: column;
  width: 9px;
}
.vbar b {
  height: 10px;
}
.vbar i {
  flex: none;
  height: 90%;
  margin: 0 1px;
  background: #bdbdbf;
}
.vbar b:last-child {
  margin-top: auto;
}
.hbar {
  flex: none;
  height: 8px;
}
.hbar b {
  width: 9px;
}
.hbar i {
  flex: 1;
  background: #bdbdbd;
}
.hbar b:last-child {
  width: 24px;
}

.taskbar {
  display: flex;
  flex: none;
  height: 22px;
  background: linear-gradient(90deg, #73409f 0, #7c4aae 25%, #7b62d6 46%, #7a60d2 58%, #7b4aac 72%, #7a449f);
  color: #f2e8fa;
}
.start {
  display: grid;
  place-items: center;
  width: 26px;
}
.find {
  display: flex;
  align-items: center;
  gap: 5px;
  width: 186px;
  padding: 0 2px 0 6px;
  background: #ae69d6;
  color: #ead3f7;
  font-size: 8px;
  white-space: nowrap;
}
.party {
  width: 40px;
  height: 20px;
  margin-left: auto;
}
.apps {
  display: flex;
  width: 346px;
}
.app {
  display: grid;
  flex: 1;
  place-items: center;
  padding: 1px 0 0;
}
.app.open {
  margin: 0 2px;
  border-bottom: 1px solid #e8d8f4;
}
.app.active {
  margin: 0;
  background: #a577cc;
}
.tray {
  display: flex;
  align-items: center;
  margin-left: auto;
  font-size: 7px;
  white-space: nowrap;
}
.weather {
  margin: 0 9px 0 6px;
}
.status {
  display: flex;
  align-items: center;
  gap: 5px;
}
.lang,
.clock {
  display: flex;
  flex-direction: column;
  margin-left: 5px;
  font-size: 6px;
  line-height: 10px;
}
.clock {
  align-items: center;
}
.notice {
  position: relative;
  margin: 0 9px 0 9px;
}
.notice span {
  position: absolute;
  right: 2px;
  bottom: 0;
  font-size: 6px;
  line-height: 8px;
}
</style>
